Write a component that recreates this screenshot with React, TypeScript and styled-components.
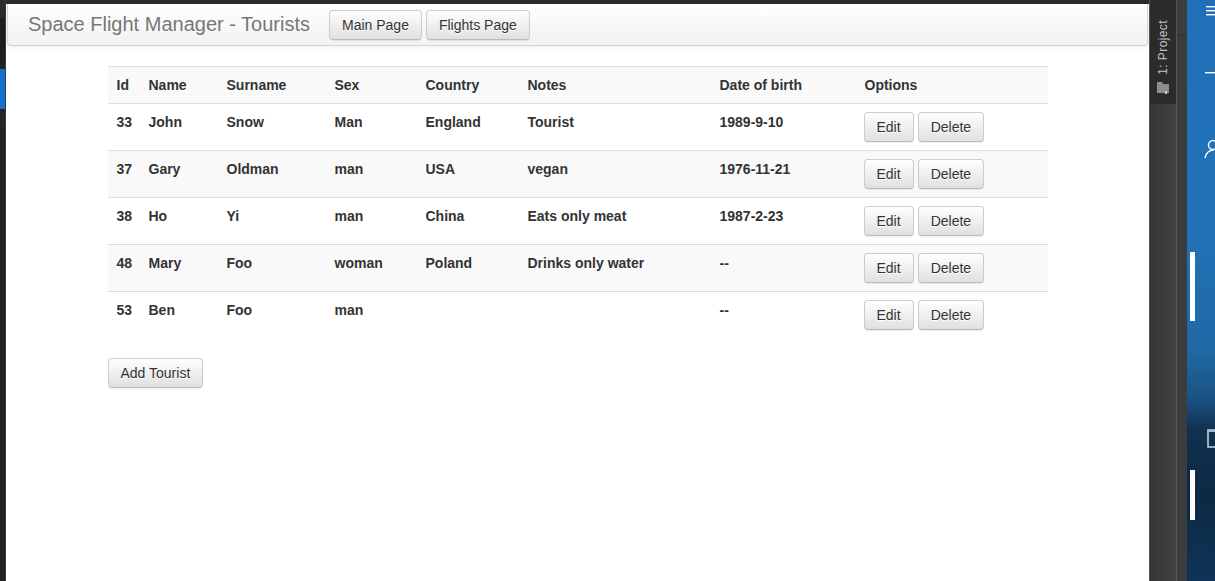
import React from "react";
import styled, { createGlobalStyle } from "styled-components";

const Global = createGlobalStyle`
  html, body { margin: 0; padding: 0; overflow: hidden; background: #2b2b2b; }
  * { box-sizing: border-box; }
`;

const Screen = styled.div`
  display: flex;
  width: 1215px;
  height: 581px;
  font-family: "Liberation Sans", Arial, sans-serif;
`;

const LeftEdge = styled.div`
  width: 6px;
  flex: none;
  background: #232323;
  border-right: 1px solid #3a3a3a;
  display: flex;
  flex-direction: column;
`;

const EdgeBlock = styled.div<{ $h: number; $c: string }>`
  height: ${(p) => p.$h}px;
  background: ${(p) => p.$c};
  flex: none;
`;

const Browser = styled.div`
  width: 1143px;
  flex: none;
  display: flex;
  flex-direction: column;
  background: #fff;
`;

const TopStrip = styled.div`
  height: 4px;
  background: #2b2b2b;
  flex: none;
`;

const Page = styled.div`
  flex: 1;
  background: #fff;
  padding: 0 1px 0 1px;
`;

const Navbar = styled.div`
  height: 42px;
  display: flex;
  align-items: center;
  padding: 0 20px;
  gap: 19px;
  background: linear-gradient(to bottom, #ffffff 0%, #f2f2f2 100%);
  border: 1px solid #d4d4d4;
  border-top: none;
  border-radius: 0 0 4px 4px;
  box-shadow: inset 0 1px 0 rgba(255, 255, 255, 0.15), 0 1px 5px rgba(0, 0, 0, 0.075);
`;

const Brand = styled.div`
  font-size: 20px;
  color: #777;
  line-height: 20px;
  margin-top: -1px;
`;

const NavButtons = styled.div`
  display: flex;
  gap: 4px;
`;

const Button = styled.button<{ $h?: number }>`
  font-family: "Liberation Sans", Arial, sans-serif;
  font-size: 14px;
  line-height: 20px;
  color: #333;
  padding: 4px 12px;
  height: ${(p) => p.$h ?? 30}px;
  background: linear-gradient(to bottom, #ffffff 0%, #e0e0e0 100%);
  border: 1px solid #ccc;
  border-color: #ccc #ccc #bbb;
  border-radius: 4px;
  box-shadow: inset 0 1px 0 rgba(255, 255, 255, 0.15), 0 1px 1px rgba(0, 0, 0, 0.075);
  text-shadow: 0 1px 0 #fff;
  cursor: pointer;
`;

const Container = styled.div`
  width: 940px;
  margin: 20px auto 0;
  position: relative;
  left: 0;
`;

const Table = styled.table`
  width: 940px;
  border-collapse: collapse;
  table-layout: fixed;
  font-size: 14px;
  color: #333;
  margin-bottom: 20px;
`;

const Row = styled.tr<{ $striped: boolean }>`
  background: ${(p) => (p.$striped ? "#f9f9f9" : "#fff")};
  border-top: 1px solid #ddd;
`;

const HeadRow = styled.tr`
  background: #f9f9f9;
  border-top: 1px solid #ddd;
`;

const HeadCell = styled.th`
  text-align: left;
  padding: 8px 8px 8px 9px;
  line-height: 20px;
  font-weight: bold;
  vertical-align: bottom;
  border-bottom: 1px solid #ddd;
`;

const Cell = styled.td`
  text-align: left;
  padding: 8px 8px 8px 9px;
  line-height: 20px;
  font-weight: bold;
  vertical-align: top;
`;

const OptionsCell = styled.td`
  padding: 8px;
  vertical-align: top;
`;

const Options = styled.div`
  display: flex;
  gap: 4px;
`;

const IdePanel = styled.div`
  width: 38px;
  flex: none;
  display: flex;
  background: #3c3f41;
  border-left: 1px solid #555;
`;

const ToolStrip = styled.div`
  width: 27px;
  display: flex;
  flex-direction: column;
  background: linear-gradient(to right, #333537, #404244);
  border-right: 1px solid #555;
`;

const ToolTab = styled.div`
  height: 104px;
  background: #2b2b2b;
  display: flex;
  flex-direction: column;
  align-items: center;
  padding-top: 20px;
  gap: 6px;
`;

const VerticalLabel = styled.div`
  writing-mode: vertical-rl;
  transform: rotate(180deg);
  font-size: 12px;
  color: #c4c4c4;
  font-family: "Liberation Sans", Arial, sans-serif;
  letter-spacing: 0.4px;
`;

const Gutter = styled.div`
  flex: 1;
  background: #3a3c3e;
  display: flex;
  flex-direction: column;
`;

const GutterTop = styled.div`
  height: 35px;
  border-bottom: 1px solid #2f3133;
  background: #3c3f41;
`;

const Desktop = styled.div`
  flex: 1;
  position: relative;
  background: linear-gradient(
    to bottom,
    #1f70b8 0%,
    #2172b6 40%,
    #2068a6 60%,
    #1b5587 68%,
    #11314f 74%,
    #0d2a44 85%,
    #0f3358 100%
  );
`;

const Glyph = styled.div<{ $top: number }>`
  position: absolute;
  right: 0;
  top: ${(p) => p.$top}px;
  line-height: 0;
`;

const WhiteBar = styled.div<{ $top: number; $h: number }>`
  position: absolute;
  left: 3px;
  top: ${(p) => p.$top}px;
  width: 5px;
  height: ${(p) => p.$h}px;
  background: #fff;
`;

type Tourist = {
  id: number;
  name: string;
  surname: string;
  sex: string;
  country: string;
  notes: string;
  dob: string;
};

const tourists: Tourist[] = [
  { id: 33, name: "John", surname: "Snow", sex: "Man", country: "England", notes: "Tourist", dob: "1989-9-10" },
  { id: 37, name: "Gary", surname: "Oldman", sex: "man", country: "USA", notes: "vegan", dob: "1976-11-21" },
  { id: 38, name: "Ho", surname: "Yi", sex: "man", country: "China", notes: "Eats only meat", dob: "1987-2-23" },
  { id: 48, name: "Mary", surname: "Foo", sex: "woman", country: "Poland", notes: "Drinks only water", dob: "--" },
  { id: 53, name: "Ben", surname: "Foo", sex: "man", country: "", notes: "", dob: "--" },
];

const colWidths = [32, 78, 108, 91, 102, 192, 145, 192];

export default function App() {
  return (
    <>
      <Global />
      <Screen>
        <LeftEdge>
          <EdgeBlock $h={18} $c="#2b2b2b" />
          <EdgeBlock $h={46} $c="#1e1e1e" />
          <EdgeBlock $h={5} $c="#232323" />
          <EdgeBlock $h={40} $c="#1170d0" />
          <EdgeBlock $h={20} $c="#262626" />
        </LeftEdge>
        <Browser>
          <TopStrip />
          <Page>
            <Navbar>
              <Brand>Space Flight Manager - Tourists</Brand>
              <NavButtons>
                <Button $h={30}>Main Page</Button>
                <Button $h={30}>Flights Page</Button>
              </NavButtons>
            </Navbar>
            <Container>
              <Table>
                <colgroup>
                  {colWidths.map((w, i) => (
                    <col key={i} style={{ width: w }} />
                  ))}
                </colgroup>
                <thead>
                  <HeadRow>
                    <HeadCell>Id</HeadCell>
                    <HeadCell>Name</HeadCell>
                    <HeadCell>Surname</HeadCell>
                    <HeadCell>Sex</HeadCell>
                    <HeadCell>Country</HeadCell>
                    <HeadCell>Notes</HeadCell>
                    <HeadCell>Date of birth</HeadCell>
                    <HeadCell>Options</HeadCell>
                  </HeadRow>
                </thead>
                <tbody>
                  {tourists.map((t, i) => (
                    <Row key={t.id} $striped={i % 2 === 1}>
                      <Cell>{t.id}</Cell>
                      <Cell>{t.name}</Cell>
                      <Cell>{t.surname}</Cell>
                      <Cell>{t.sex}</Cell>
                      <Cell>{t.country}</Cell>
                      <Cell>{t.notes}</Cell>
                      <Cell>{t.dob}</Cell>
                      <OptionsCell>
                        <Options>
                          <Button>Edit</Button>
                          <Button>Delete</Button>
                        </Options>
                      </OptionsCell>
                    </Row>
                  ))}
                </tbody>
              </Table>
              <Button>Add Tourist</Button>
            </Container>
          </Page>
        </Browser>
        <IdePanel>
          <ToolStrip>
            <ToolTab>
              <VerticalLabel>1: Project</VerticalLabel>
              <svg width="12" height="14" viewBox="0 0 12 14">
                <path d="M0 1h5l1 2h6v9H0z" fill="#8a8d90" />
                <rect x="8" y="10" width="2" height="3" fill="#ccc" />
              </svg>
            </ToolTab>
          </ToolStrip>
          <Gutter>
            <GutterTop />
          </Gutter>
        </IdePanel>
        <Desktop>
          <Glyph $top={2}>
            <svg width="12" height="16" viewBox="0 0 12 16">
              <rect x="3" y="4" width="9" height="1.4" fill="#fff" />
              <rect x="3" y="8" width="9" height="1.4" fill="#fff" />
              <rect x="3" y="12" width="9" height="1.4" fill="#fff" />
            </svg>
          </Glyph>
          <Glyph $top={70}>
            <svg width="12" height="4" viewBox="0 0 12 4">
              <rect x="2" y="1" width="10" height="1.4" fill="#fff" />
            </svg>
          </Glyph>
          <Glyph $top={138}>
            <svg width="12" height="22" viewBox="0 0 12 22">
              <circle cx="10" cy="7" r="4.5" fill="none" stroke="#fff" strokeWidth="1.4" />
              <path d="M2 20c1-5 4-8 9-8" fill="none" stroke="#fff" strokeWidth="1.4" />
            </svg>
          </Glyph>
          <WhiteBar $top={252} $h={69} />
          <Glyph $top={429}>
            <svg width="12" height="20" viewBox="0 0 12 20">
              <rect x="5" y="1" width="10" height="17" fill="none" stroke="#c8d8e6" strokeWidth="1.5" />
              <rect x="5" y="1" width="10" height="2" fill="#9fb8cc" />
            </svg>
          </Glyph>
          <WhiteBar $top={470} $h={50} />
        </Desktop>
      </Screen>
    </>
  );
}
